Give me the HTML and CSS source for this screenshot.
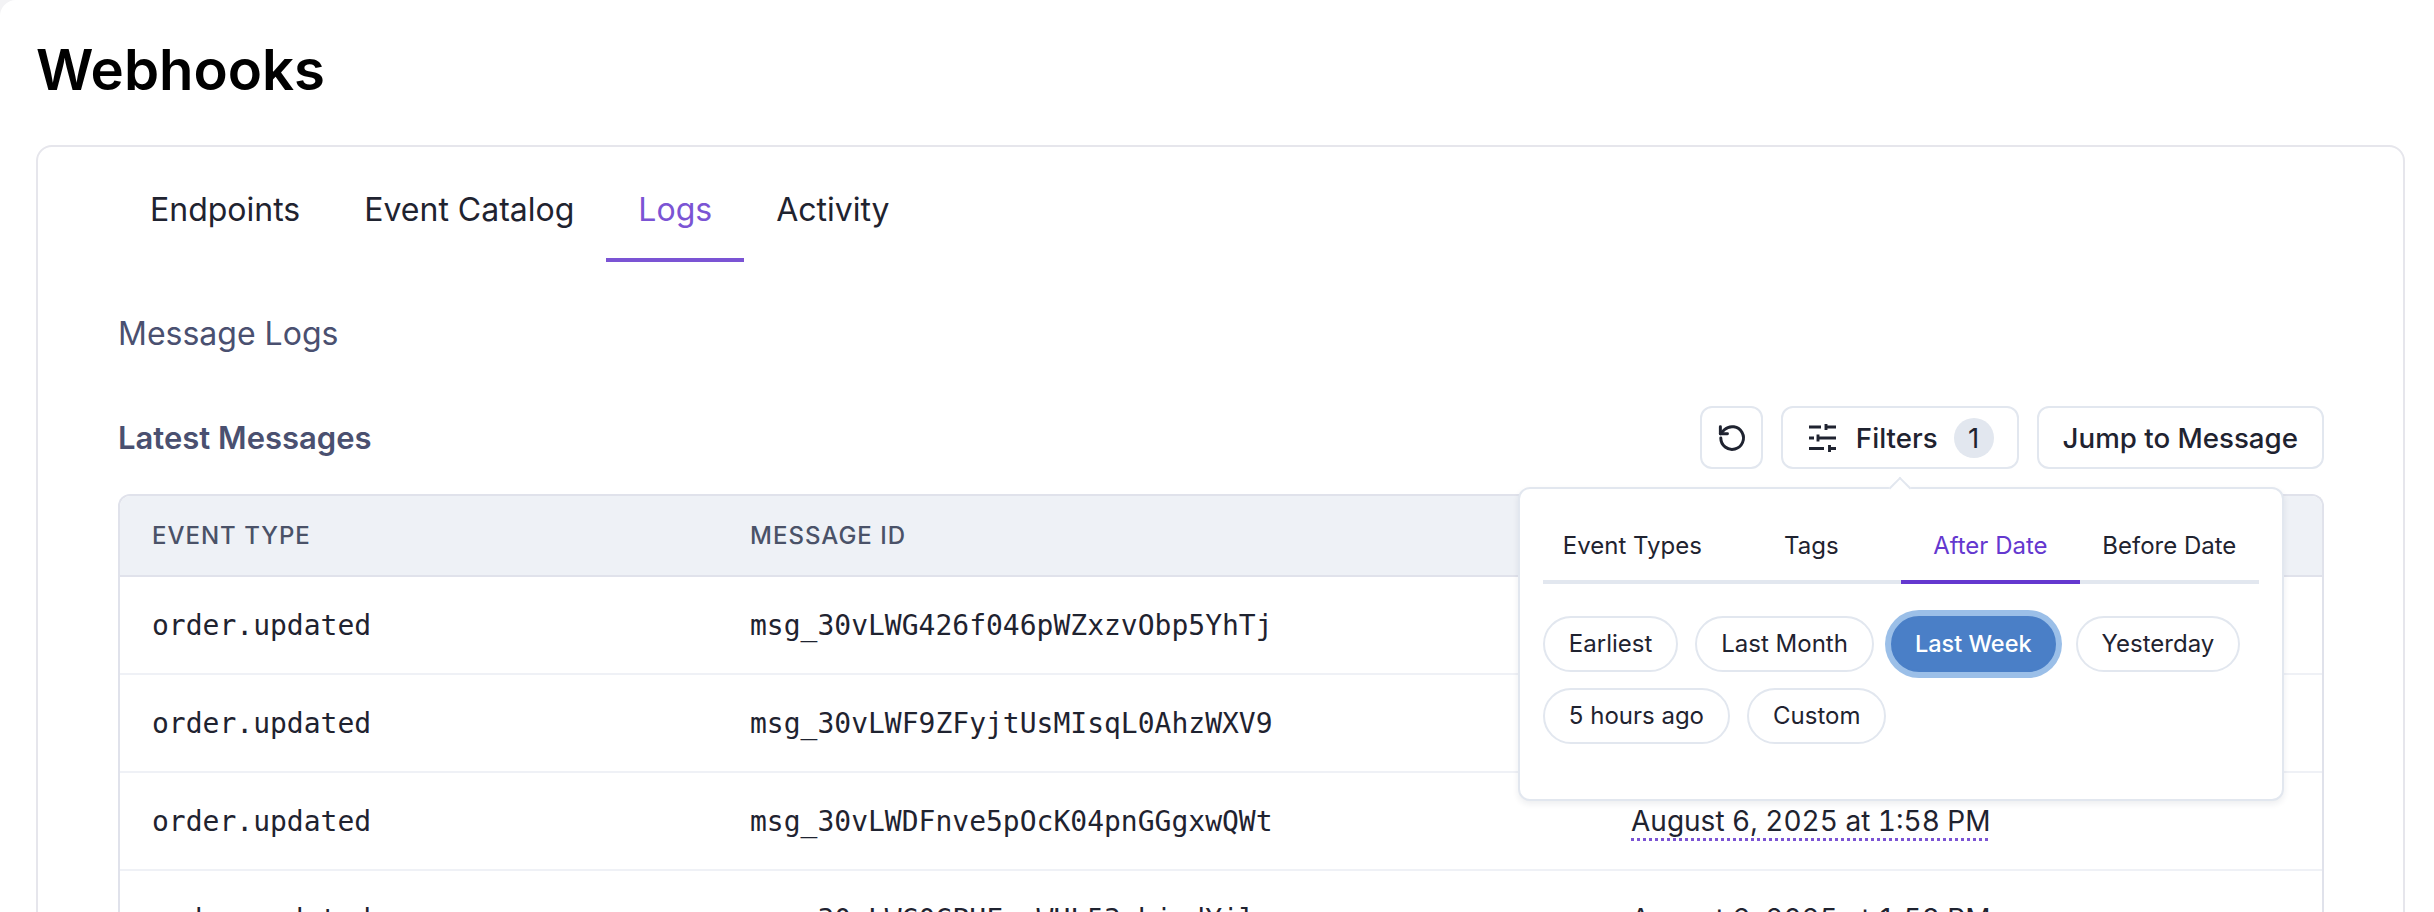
FILE: index.html
```html
<!DOCTYPE html>
<html lang="en">
<head>
<meta charset="utf-8">
<title>Webhooks</title>
<link rel="stylesheet" href="styles.css">
</head>
<body>
<main class="page">
  <h1 class="title">Webhooks</h1>
  <section class="card">
    <nav class="tabs">
      <a class="tab">Endpoints</a>
      <a class="tab">Event Catalog</a>
      <a class="tab tab-active">Logs</a>
      <a class="tab">Activity</a>
    </nav>
    <div class="content">
      <h2 class="subtitle">Message Logs</h2>
      <div class="toolbar">
        <h3 class="heading">Latest Messages</h3>
        <div class="actions">
          <button class="btn btn-icon" aria-label="Refresh">
            <svg class="icon-refresh" viewBox="-0.500 0 24 24" fill="none" stroke="currentColor" stroke-width="2.100" stroke-linecap="round" stroke-linejoin="round"><path d="M4.3 12a8 8 0 1 0 2.5-5.800L4 9"/><path d="M4 4v5h5"/></svg>
          </button>
          <button class="btn btn-filters">
            <svg class="icon-filter" viewBox="0 0 27 28" fill="none" stroke="currentColor" stroke-width="2.900"><path d="M0 3h12M17 3h10M17 0v6M0 14h5M9 14h18M9 10.500v7M0 24.500h15M20.500 24.500h6.500M20.500 21v7"/></svg>
            <span>Filters</span>
            <span class="badge">1</span>
          </button>
          <button class="btn btn-jump">Jump to Message</button>
          <div class="popover">
            <div class="pop-tabs">
              <a class="pop-tab">Event Types</a>
              <a class="pop-tab">Tags</a>
              <a class="pop-tab pop-tab-active">After Date</a>
              <a class="pop-tab">Before Date</a>
            </div>
            <div class="pills">
              <button class="pill">Earliest</button>
              <button class="pill">Last Month</button>
              <button class="pill pill-active">Last Week</button>
              <button class="pill">Yesterday</button>
              <button class="pill">5 hours ago</button>
              <button class="pill">Custom</button>
            </div>
          </div>
        </div>
      </div>
      <div class="table">
        <div class="row row-head">
          <div>EVENT TYPE</div><div>MESSAGE ID</div><div>TIMESTAMP</div>
        </div>
        <div class="row">
          <div class="mono">order.updated</div><div class="mono">msg_30vLWG426f046pWZxzvObp5YhTj</div><div><span class="date">August 6, 2025 at 1:58 PM</span></div>
        </div>
        <div class="row">
          <div class="mono">order.updated</div><div class="mono">msg_30vLWF9ZFyjtUsMIsqL0AhzWXV9</div><div><span class="date">August 6, 2025 at 1:58 PM</span></div>
        </div>
        <div class="row">
          <div class="mono">order.updated</div><div class="mono">msg_30vLWDFnve5pOcK04pnGGgxwQWt</div><div><span class="date">August 6, 2025 at 1:58 PM</span></div>
        </div>
        <div class="row">
          <div class="mono">order.updated</div><div class="mono">msg_30vLWG0GPHFzrWHL53xhjndYile</div><div><span class="date">August 6, 2025 at 1:58 PM</span></div>
        </div>
      </div>
    </div>
  </section>
</main>
</body>
</html>
```
FILE: styles.css
```css
* { box-sizing: border-box; }
html {
  height: 100%;
  overflow: hidden;
  background: #f3f3f5;
}
body {
  margin: 0;
  height: 100%;
  overflow: hidden;
  background: #fff;
  border-top-left-radius: 16px;
  font-family: Inter, "Liberation Sans", sans-serif;
  color: #1f2330;
}
.page { padding: 40px 29px 0 36px; }
.title {
  margin: 0;
  font-size: 56.300px;
  line-height: 60px;
  font-weight: 600;
  color: #000;
}
.card {
  margin-top: 45px;
  height: 900px;
  border: 2px solid #e6e6ec;
  border-radius: 16px;
  background: #fff;
}
.tabs {
  display: flex;
  padding: 0 0 0 80px;
  height: 115px;
}
.tab {
  display: flex;
  align-items: center;
  padding: 14px 32px 0;
  height: 115px;
  font-size: 32px;
  color: #1f2330;
  border-bottom: 4px solid transparent;
}
.tab-active {
  color: #7b54d4;
  border-bottom-color: #7b54d4;
}
.content { padding: 0 79px 0 80px; }
.subtitle {
  margin: 52px 0 0;
  font-size: 32px;
  line-height: 40px;
  font-weight: 400;
  color: #4a5070;
}
.toolbar {
  display: flex;
  justify-content: space-between;
  align-items: center;
  margin-top: 52px;
  height: 63px;
}
.heading {
  margin: 0;
  font-size: 31px;
  font-weight: 600;
  color: #4a5070;
}
.actions {
  position: relative;
  display: flex;
  gap: 18px;
}
.btn {
  display: flex;
  align-items: center;
  height: 63px;
  padding: 0 24px;
  border: 2px solid #e2e7ef;
  border-radius: 12px;
  background: #fff;
  font-family: inherit;
  font-size: 27.700px;
  font-weight: 500;
  color: #1f2330;
}
.btn-icon { width: 63px; padding: 0; justify-content: center; }
.icon-refresh { width: 34px; height: 34px; }
.btn-filters { gap: 20px; padding: 0 23px 0 26px; }
.icon-filter { width: 27px; height: 28px; }
.badge {
  display: flex;
  align-items: center;
  justify-content: center;
  width: 40px;
  height: 40px;
  margin-left: -4px;
  border-radius: 50%;
  background: #e2e7ef;
  font-weight: 400;
}
.popover {
  position: absolute;
  z-index: 2;
  top: 81px;
  left: -182px;
  width: 766px;
  height: 314px;
  padding: 32px 23px 0;
  background: #fff;
  border: 2px solid #e2e7ef;
  border-radius: 12px;
  box-shadow: 0 3px 6px rgba(30, 40, 70, .08);
}
.popover::before {
  content: "";
  position: absolute;
  top: -9px;
  left: 372px;
  width: 14px;
  height: 14px;
  background: #fff;
  border-top: 2px solid #e2e7ef;
  border-left: 2px solid #e2e7ef;
  transform: rotate(45deg);
}
.pop-tabs {
  display: grid;
  grid-template-columns: repeat(4, 1fr);
  border-bottom: 4px solid #e2e7ef;
}
.pop-tab {
  box-sizing: content-box;
  height: 49px;
  margin-bottom: -4px;
  padding-top: 10px;
  text-align: center;
  font-size: 24px;
  line-height: 30px;
  color: #1f2330;
  border-bottom: 4px solid transparent;
}
.pop-tab-active {
  color: #6438cf;
  border-bottom-color: #6438cf;
}
.pills {
  display: flex;
  flex-wrap: wrap;
  gap: 16px 17px;
  margin-top: 32px;
}
.pill {
  height: 56px;
  padding: 0 24px 2px;
  border: 2px solid #e2e7ef;
  border-radius: 28px;
  background: #fff;
  font-family: inherit;
  font-size: 24px;
  color: #1f2330;
}
.pill-active {
  padding: 0 22px 2px;
  margin-right: 3px;
  background: #4a7fc7;
  border-color: #4a7fc7;
  color: #fff;
  font-size: 23.500px;
  font-weight: 500;
  box-shadow: 0 0 0 6px #9bbfe8;
}
.table {
  margin-top: 25px;
  border: 2px solid #e0e2eb;
  border-bottom: 0;
  border-radius: 12px 12px 0 0;
  overflow: hidden;
}
.row {
  display: grid;
  grid-template-columns: 598px 881px 1fr;
  align-items: center;
  height: 98px;
  padding-left: 32px;
  border-bottom: 2px solid #eff1f6;
  font-size: 28px;
}
.row-head {
  height: 81px;
  background: #eef1f6;
  border-bottom: 2px solid #e0e2eb;
  font-size: 24px;
  font-weight: 500;
  letter-spacing: 1px;
  color: #4a5268;
}
.mono {
  font-family: "DejaVu Sans Mono", monospace;
  font-size: 28px;
  color: #1f2330;
}
.date {
  text-decoration: underline dotted #7b54d4 2.500px;
  text-underline-offset: 7px;
  font-size: 28px;
  font-variant-numeric: tabular-nums;
  color: #1f2330;
}
```
